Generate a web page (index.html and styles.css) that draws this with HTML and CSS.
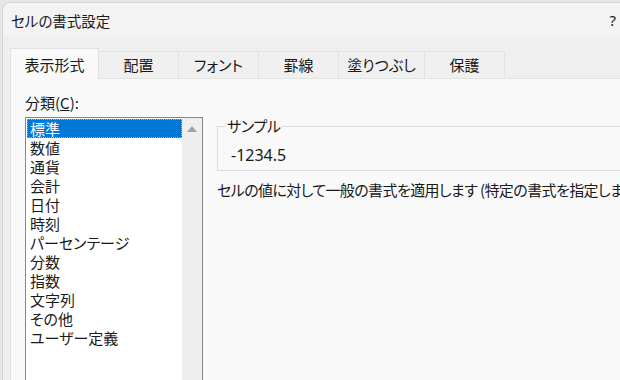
FILE: index.html
```html
<!doctype html>
<html>
  <head>
    <meta charset="utf-8">
    <link rel="stylesheet" href="styles.css">
    <title>セルの書式設定</title>
  </head>
  <body>
    <div id="dialog">
      <div class="title-bar">
        <span class="title">セルの書式設定</span>
        <span class="help">?</span>
      </div>
      <div class="tab-strip">
        <div class="tab active">表示形式</div>
        <div class="tab">配置</div>
        <div class="tab">フォント</div>
        <div class="tab">罫線</div>
        <div class="tab wide">塗りつぶし</div>
        <div class="tab">保護</div>
      </div>
      <div class="panel">
        <div class="left-col">
          <div class="label">分類(<u>C</u>):</div>
          <div class="listbox">
            <ul class="items">
              <li class="selected">標準</li>
              <li>数値</li>
              <li>通貨</li>
              <li>会計</li>
              <li>日付</li>
              <li>時刻</li>
              <li>パーセンテージ</li>
              <li>分数</li>
              <li>指数</li>
              <li>文字列</li>
              <li>その他</li>
              <li>ユーザー定義</li>
            </ul>
            <div class="scrollbar"><span class="arrow-up"></span></div>
          </div>
        </div>
        <div class="right-col">
          <fieldset class="sample">
            <legend>サンプル</legend>
            <div class="sample-value">-1234.5</div>
          </fieldset>
          <div class="description">セルの値に対して一般の書式を適用します (特定の書式を指定しません。)</div>
        </div>
      </div>
    </div>
  </body>
</html>
```

FILE: styles.css
```css
body {
  margin: 0;
  background: #e6e6e6;
  font-family: "Noto Sans CJK JP", "Noto Sans", sans-serif;
  font-size: 15px;
  font-feature-settings: "palt";
  color: #1a1a1a;
  overflow: hidden;
}

#dialog {
  margin: 2px 0 0 2px;
  height: 400px;
  border: 1px solid #d4d4d4;
  border-right: none;
  border-bottom: none;
  border-top-left-radius: 8px;
  background: #efefef;
  overflow: hidden;
}

.title-bar {
  display: flex;
  justify-content: space-between;
  align-items: center;
  height: 34px;
  padding: 0 4px 0 8px;
  background: #f3f3f3;
  border-top-left-radius: 8px;
}

.title {
  font-size: 14.5px;
}

.help {
  font-family: "Noto Sans", sans-serif;
  font-size: 15px;
}

.tab-strip {
  display: flex;
  align-items: flex-end;
  padding: 11px 0 0 7px;
  position: relative;
  z-index: 1;
}

.tab {
  width: 79px;
  height: 26px;
  line-height: 26px;
  text-align: center;
  background: #f0f0f0;
  border: 1px solid #e2e2e2;
  border-bottom: none;
  border-left: none;
}

.tab.wide {
  width: 85px;
}

.tab.active {
  width: 87px;
  height: 30px;
  line-height: 31px;
  margin-bottom: -1px;
  background: #f9f9f9;
  border-left: 1px solid #e2e2e2;
}

.panel {
  display: flex;
  gap: 14px;
  margin-left: 7px;
  padding: 14px 0 0 14px;
  height: 320px;
  background: #f9f9f9;
  border-top: 1px solid #e2e2e2;
  border-left: 1px solid #e2e2e2;
}

.left-col {
  width: 178px;
  flex-shrink: 0;
}

.label {
  height: 19px;
  line-height: 19px;
  margin-bottom: 5px;
}

.listbox {
  display: flex;
  height: 280px;
  border: 1px solid #828790;
  background: #fff;
}

.items {
  flex: 1;
  list-style: none;
  margin: 0;
  padding: 1px 0 0 1px;
}

.items li {
  height: 19px;
  line-height: 19px;
  padding-left: 3px;
}

.items li.selected {
  background: #0078d7;
  color: #fff;
  outline: 1px dotted #f4a14a;
  outline-offset: -1px;
}

.scrollbar {
  width: 20px;
  background: #eeeeee;
  display: flex;
  justify-content: center;
  padding-top: 8px;
  box-sizing: border-box;
}

.arrow-up {
  width: 0;
  height: 0;
  border-left: 5px solid transparent;
  border-right: 5px solid transparent;
  border-bottom: 6px solid #a3a3a3;
}

.right-col {
  flex: 1;
  min-width: 0;
  padding-top: 24px;
}

.sample {
  margin: 0;
  padding: 0 8px 3px 8px;
  border: 1px solid #dcdcdc;
  border-right: none;
}

.sample legend {
  padding: 0 1px;
  line-height: 18px;
  letter-spacing: -0.3px;
}

.sample-value {
  font-family: "Noto Sans", sans-serif;
  font-size: 16px;
  padding-left: 5px;
  line-height: 24px;
  margin-top: 8px;
}

.description {
  margin-top: 9px;
  line-height: 19px;
  white-space: nowrap;
  letter-spacing: -0.6px;
}
```
